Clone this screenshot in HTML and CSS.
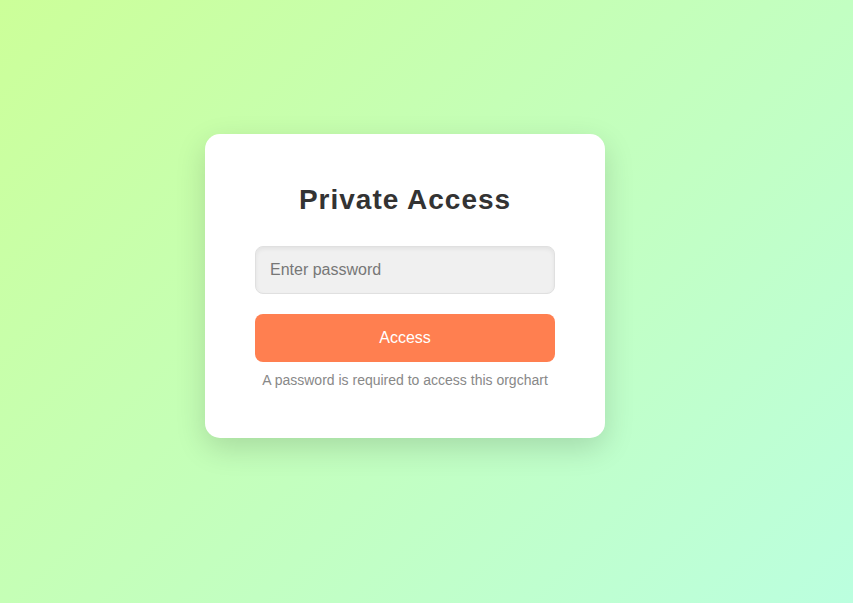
FILE: index.html
```html
<!DOCTYPE html>
<html>
<head>
<meta charset="utf-8">
<link rel="stylesheet" href="styles.css">
</head>
<body>
<div class="page">
  <div class="card">
    <h2 class="title">Private Access</h2>
    <input class="field" type="password" placeholder="Enter password">
    <button class="btn">Access</button>
    <p class="hint">A password is required to access this orgchart</p>
  </div>
</div>
</body>
</html>
```
FILE: styles.css
```css
html, body {
  margin: 0;
  padding: 0;
  height: 100%;
}
body {
  font-family: "Liberation Sans", Arial, sans-serif;
  background: linear-gradient(135deg, #ccff99 0%, #bbffdf 100%);
}
.page {
  box-sizing: border-box;
  height: 100vh;
  display: flex;
  align-items: center;
  justify-content: center;
  padding: 0 43px 31px 0;
}
.card {
  box-sizing: border-box;
  width: 400px;
  background: #fff;
  border-radius: 15px;
  padding: 50px;
  box-shadow: 0 10px 30px rgba(0, 0, 0, 0.15);
  display: flex;
  flex-direction: column;
  align-items: stretch;
  text-align: center;
}
.title {
  margin: 0 0 30px;
  font-size: 28px;
  line-height: 32px;
  font-weight: bold;
  letter-spacing: 1px;
  color: #333;
}
.field {
  box-sizing: border-box;
  height: 48px;
  width: 100%;
  margin: 0;
  padding: 0 14px;
  border: 1px solid #e0e0e0;
  border-radius: 8px;
  background: #f0f0f0;
  box-shadow: inset 0 2px 4px rgba(0, 0, 0, 0.06);
  font-family: "Liberation Sans", Arial, sans-serif;
  font-size: 16px;
  color: #333;
  outline: none;
}
.field::placeholder {
  color: #777;
}
.btn {
  box-sizing: border-box;
  height: 48px;
  width: 100%;
  margin: 20px 0 0;
  border: none;
  border-radius: 8px;
  background: #ff7f50;
  color: #fff;
  font-family: "Liberation Sans", Arial, sans-serif;
  font-size: 16px;
  cursor: pointer;
}
.hint {
  margin: 10px 0 0;
  font-size: 14px;
  line-height: 16px;
  color: #888;
}
```
